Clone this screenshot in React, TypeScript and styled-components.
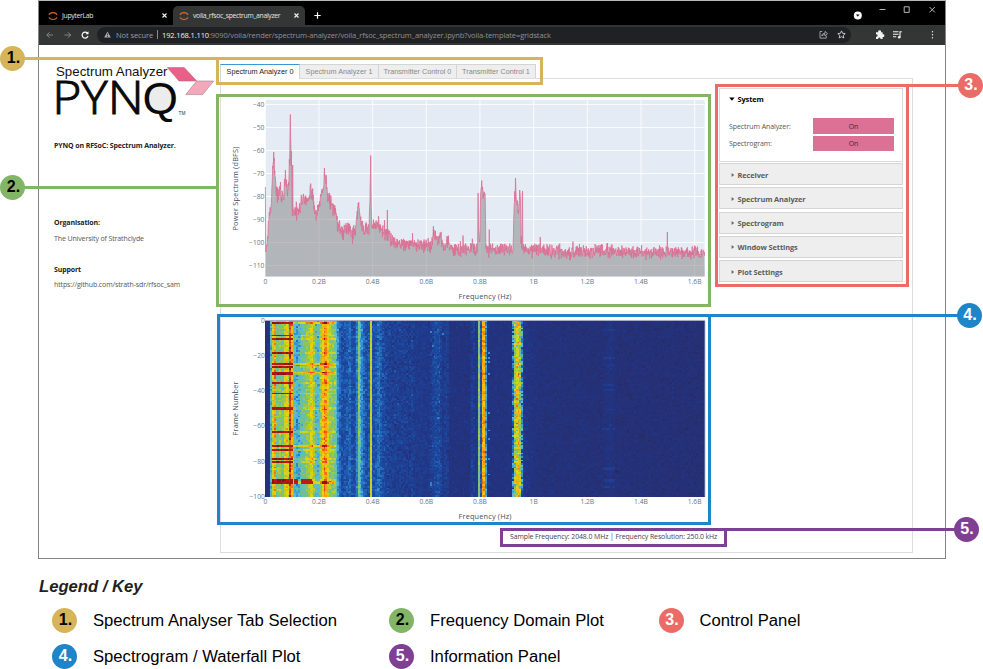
import React from "react";
import styled, { createGlobalStyle } from "styled-components";

const GlobalStyle = createGlobalStyle`
  * { box-sizing: border-box; }
  body { margin: 0; background: #fff; }
`;

const SEGOE = `"Open Sans", "Noto Sans", sans-serif`;
const ARIAL = `"Liberation Sans", Arial, sans-serif`;

/* ---------- data ---------- */

function makeRandom(seed: number) {
  let s = seed;
  return () => {
    s = (s * 1664525 + 1013904223) % 4294967296;
    return s / 4294967296;
  };
}

type Point = [number, number];

function lerpAt(points: Point[], x: number) {
  if (x <= points[0][0]) return points[0][1];
  for (let i = 1; i < points.length; i++) {
    if (x <= points[i][0]) {
      const [x0, y0] = points[i - 1];
      const [x1, y1] = points[i];
      return y0 + ((y1 - y0) * (x - x0)) / (x1 - x0 || 1);
    }
  }
  return points[points.length - 1][1];
}

/* Mean level of the power trace: chart x, chart y */
const ENVELOPE: Point[] = [
  [265, 256], [267.5, 240], [269, 214], [271, 207], [272.6, 172], [273.4, 156], [274.6, 166], [276, 188], [278, 195],
  [280, 189], [281.5, 198], [283.5, 194], [285.5, 173], [287.5, 194], [289, 176], [289.8, 150],
  [290.3, 117], [290.9, 150], [291.3, 170], [292, 206], [294, 211], [297, 210], [300, 208], [302.5, 197], [305.5, 198],
  [308.5, 200], [310.7, 186], [313, 198], [316, 215], [319, 204], [322, 189], [323.6, 186], [324.5, 176], [326, 182],
  [328, 198], [333, 205], [335.5, 207], [337.5, 225], [343, 231], [348, 226], [352.5, 236], [355, 228],
  [358.2, 206], [360.5, 220], [364.5, 232], [369, 228], [370, 200], [370.6, 158], [371.2, 200], [371.8, 228],
  [378, 225], [384, 231], [388, 233], [395, 242], [405, 244], [415, 244], [425, 246], [432, 245], [433.3, 231],
  [438, 239], [441, 236], [444, 248], [446.5, 241], [455, 249], [465, 249], [470.5, 249], [472.4, 239], [474, 249],
  [477.6, 249], [478, 196], [479, 240], [480, 236], [480.6, 190], [481.8, 186], [482.8, 191], [485.2, 193],
  [485.8, 249], [513, 250], [514.3, 200], [515.8, 188], [517, 205], [518.5, 212], [519.5, 196], [520.5, 200],
  [521, 243], [521.8, 244], [522.3, 196], [522.8, 249], [545, 250], [566, 252], [605, 250], [625, 252], [704.8, 252],
];

/* Isolated narrow peaks: chart x, top y */
const SPIKES: Point[] = [
  [265.5, 187], [273.6, 152], [290.3, 114.5], [291.5, 151], [292.6, 165], [324.4, 168], [325.4, 180], [285.4, 170], [310.8, 184],
  [280.4, 182], [358.3, 203], [370.6, 155.5], [378.4, 216], [384.5, 220], [387.4, 210], [412.5, 233], [463, 235.5],
  [478, 193], [481.8, 180.5], [489.3, 229.5], [515.6, 178], [519.6, 190], [522.5, 191], [540.2, 237], [573, 241.5],
  [595, 244], [667.4, 232],
];

const TRACE_STEP = 0.26;

function buildTrace() {
  const rnd = makeRandom(77);
  const pts: Point[] = [];
  for (let x = 265.4; x <= 704.7; x += TRACE_STEP) {
    const noise = rnd() + rnd() + rnd() - 1.5;
    const amp = x < 269 ? 4 : x < 400 ? 8 : 6.4;
    let y = lerpAt(ENVELOPE, x) + noise * amp + 0.5;
    for (const [sx, sy] of SPIKES) if (Math.abs(sx - x) <= TRACE_STEP / 2) y = sy;
    pts.push([x, y]);
  }
  return pts.map(([x, y]) => `${x.toFixed(2)} ${y.toFixed(1)}`).join("L");
}

/* Mean intensity of each waterfall column: chart x, value 0..1 */
const COLUMNS: Point[] = [
  [265, 0.04], [269.5, 0.07], [271, 0.34], [273, 0.6], [274.8, 0.78], [276.5, 0.47], [280, 0.52], [282, 0.44],
  [284, 0.5], [286.5, 0.72], [288.3, 0.56], [290, 0.9], [291.6, 0.88], [292.6, 0.48], [295, 0.4], [297.5, 0.31],
  [300, 0.4], [303, 0.45], [306.5, 0.48], [310, 0.56], [311.7, 0.72], [313.5, 0.55], [316, 0.39], [318.5, 0.38],
  [320.5, 0.48], [322.3, 0.66], [325, 0.82], [326.5, 0.75], [328.5, 0.57], [332, 0.5], [335.5, 0.48], [337, 0.36],
  [339, 0.24], [342, 0.16], [347, 0.19], [350, 0.22], [353, 0.15], [356, 0.2], [358, 0.32], [359, 0.54], [360, 0.38],
  [362, 0.28], [364, 0.22], [367, 0.15], [369.6, 0.2], [370.3, 0.6], [371.8, 0.6], [372.5, 0.17], [376, 0.19],
  [379, 0.25], [382, 0.17], [390, 0.12], [402, 0.12], [410, 0.1], [412, 0.13], [414, 0.1], [430, 0.09], [434, 0.15],
  [440, 0.16], [443, 0.09], [447, 0.13], [450, 0.06], [469, 0.06], [473, 0.12], [476, 0.07], [477.7, 0.1],
  [478.3, 0.5], [479.4, 0.48], [480.1, 0.12], [480.9, 0.2], [481.3, 0.68], [483, 0.79], [485.4, 0.72], [486.1, 0.1],
  [490, 0.06], [512.5, 0.06], [513.8, 0.36], [515.5, 0.58], [517.8, 0.72], [519.5, 0.6], [521.5, 0.38], [522.5, 0.14],
  [525, 0.08], [540, 0.05], [604, 0.04], [610, 0.07], [616, 0.04], [704, 0.035],
];

const BURST_ROWS = [1, 8, 10, 18, 24, 26, 29, 30, 35, 41, 49, 50, 63, 71, 73, 78, 80, 90, 91, 92];
const WIDE_ROWS = [1, 24, 29, 71, 91, 92];

const RAMP: [number, number, number, number][] = [
  [0, 38, 44, 104], [0.08, 34, 54, 134], [0.17, 27, 76, 162], [0.27, 42, 130, 205], [0.37, 84, 188, 216],
  [0.48, 120, 192, 130], [0.56, 166, 205, 55], [0.66, 226, 219, 10], [0.76, 250, 170, 12], [0.86, 240, 82, 22],
  [0.93, 208, 30, 22], [1, 136, 20, 18],
];

function rampColour(v: number) {
  const k = Math.max(1, RAMP.findIndex((r) => v <= r[0]));
  const a = RAMP[k - 1];
  const b = RAMP[k];
  const t = (v - a[0]) / (b[0] - a[0]);
  const mix = (i: number) => Math.round(a[i] + (b[i] - a[i]) * t);
  return `rgb(${mix(1)},${mix(2)},${mix(3)})`;
}

const LEVELS = 40;
const COLS = 256;
const ROWS = 100;
const CELL_W = 439.4 / COLS;
const CELL_H = 176 / ROWS;

function buildWaterfall() {
  const rnd = makeRandom(2048);
  const paths: string[] = Array.from({ length: LEVELS + 1 }, () => "");
  for (let r = 0; r < ROWS; r++) {
    let runStart = 0;
    let runLevel = -1;
    for (let c = 0; c <= COLS; c++) {
      let level = -2;
      if (c < COLS) {
        const x = 265.3 + (c + 0.5) * CELL_W;
        const base = lerpAt(COLUMNS, x);
        const n = rnd() + rnd() - 1;
        let amp = base < 0.1 ? 0.035 : base < 0.3 ? 0.075 : 0.12;
        if (x > 513 && x < 522.5) amp = 0.24;
        if (x > 369.8 && x < 372) amp = 0.04;
        let v = base + n * amp;
        if (BURST_ROWS.includes(r)) {
          if (x > 271.5 && x < 292.5) v = 0.94 + rnd() * 0.06;
          else if (x >= 292.5 && x < 336) v += WIDE_ROWS.includes(r) ? 0.24 : 0.1;
        }
        if (r > 89 && r < 93 && ((x > 302 && x < 312) || (x > 294 && x < 298))) v = 0.94;
        if (x > 430 && x < 443 && rnd() > 0.985) v = 0.27;
        if (x > 489 && x < 490.8 && [18, 21, 23, 30, 52, 62, 67, 78, 87].includes(r)) v = 0.3;
        if (x > 602 && x < 616 && [5, 21, 25, 36, 39, 50, 61, 83, 84, 90, 91, 94].includes(r)) v += 0.05;
        level = Math.round(Math.min(1, Math.max(0, v)) * LEVELS);
      }
      if (level !== runLevel) {
        if (runLevel >= 0) {
          const x0 = 265.3 + runStart * CELL_W;
          const w = (c - runStart) * CELL_W;
          const y0 = 320.5 + r * CELL_H;
          paths[runLevel] += `M${x0.toFixed(2)} ${y0.toFixed(2)}h${w.toFixed(2)}v${CELL_H}h${(-w).toFixed(2)}z`;
        }
        runStart = c;
        runLevel = level;
      }
    }
  }
  return paths;
}

const TRACE = buildTrace();
const WATERFALL = buildWaterfall();
const X_TICKS = ["0", "0.2B", "0.4B", "0.6B", "0.8B", "1B", "1.2B", "1.4B", "1.6B"];
const tickX = (i: number) => 265.3 + i * 53.67;

/* ---------- page and browser chrome ---------- */

const Page = styled.div`
  position: relative;
  width: 983px;
  height: 669px;
  overflow: hidden;
  background: #fff;
  font-family: ${SEGOE};
`;

const BrowserWindow = styled.div`
  width: 908px;
  height: 559px;
  margin-left: 38px;
  border: 1px solid #858585;
  border-top-color: #b5bab8;
  display: flex;
  flex-direction: column;
`;

const TabStrip = styled.div`
  height: 24px;
  background: #000;
  display: flex;
  align-items: flex-end;
`;

const BrowserTab = styled.div<{ $active?: boolean; $width: number }>`
  width: ${(p) => p.$width}px;
  height: 19px;
  padding: 0 6px 0 ${(p) => (p.$active ? 6 : 9)}px;
  background: ${(p) => (p.$active ? "#343635" : "transparent")};
  border-radius: 5px 5px 0 0;
  display: flex;
  align-items: center;
  gap: 4px;
  font-size: 6.8px;
  letter-spacing: -0.3px;
  color: #e4e5e5;
  white-space: nowrap;
  svg:last-child { margin-left: auto; }
`;

const NewTab = styled.div`
  width: 24px;
  height: 20px;
  display: flex;
  align-items: center;
  justify-content: center;
`;

const WindowButtons = styled.div`
  margin-left: auto;
  height: 24px;
  display: flex;
`;

const Toolbar = styled.div`
  height: 20px;
  background: #343635;
  display: flex;
  align-items: center;
  padding-bottom: 1px;
`;

const NavIcons = styled.div`
  width: 58px;
  display: flex;
`;

const AddressBar = styled.div`
  width: 754px;
  height: 16px;
  border-radius: 8px;
  background: #202124;
  display: flex;
  align-items: center;
  padding: 0 5px 0 7px;
  font-size: 7.5px;
  color: #8f9193;
  white-space: nowrap;
`;

const Security = styled.span`
  width: 41px;
  margin-left: 5px;
  letter-spacing: -0.08px;
  color: #9b9d9f;
`;

const Divider = styled.span`
  width: 1px;
  height: 9px;
  margin-right: 4px;
  background: #8a8c8e;
`;

const Host = styled.span`
  color: #f1f1f1;
  letter-spacing: -0.14px;
`;

const UrlPath = styled.span`
  letter-spacing: -0.1px;
`;

const BarIcons = styled.div`
  margin-left: auto;
  display: flex;
  gap: 9px;
`;

const ExtensionIcons = styled.div`
  flex: 1;
  display: flex;
  align-items: center;
  padding-left: 24px;
`;

/* ---------- notebook page ---------- */

const Content = styled.div`
  flex: 1;
  display: grid;
  grid-template-columns: 181px 693px;
`;

const Sidebar = styled.aside`
  padding: 19px 0 0 15px;
  color: #3c3c3c;
  font-size: 7px;
  letter-spacing: -0.12px;
  line-height: 10px;
  white-space: nowrap;
`;

const Logo = styled.svg`
  display: block;
  width: 166px;
  height: 56px;
  overflow: visible;
  letter-spacing: 0;
`;

const Heading = styled.div<{ $top: number }>`
  margin-top: ${(p) => p.$top}px;
  font-weight: 700;
  color: #222;
`;

const Detail = styled.div`
  margin-top: 5.5px;
  color: #555;
`;

const Workspace = styled.main`
  padding-top: 19px;
`;

const NotebookTabs = styled.div`
  height: 14px;
  display: flex;
  position: relative;
  z-index: 1;
`;

const NotebookTab = styled.div<{ $active?: boolean; $width: number }>`
  width: ${(p) => p.$width}px;
  height: ${(p) => (p.$active ? 15 : 14)}px;
  border: 1px solid #d4d4d4;
  border-left-width: ${(p) => (p.$active ? 1 : 0)}px;
  border-bottom: 0;
  ${(p) => p.$active && "border-top-color: #3b97d8;"}
  background: ${(p) => (p.$active ? "#fff" : "#eee")};
  color: ${(p) => (p.$active ? "#222" : "#888")};
  font: 7.25px/13px ${ARIAL};
  text-align: center;
  white-space: nowrap;
`;

const TabPanel = styled.section`
  height: 475px;
  border: 1px solid #ddd;
  display: grid;
  grid-template-columns: 498px 184px;
`;

const Plots = styled.div`
  padding-top: 15px;
  display: flex;
  flex-direction: column;
`;

const Chart = styled.svg`
  display: block;
  width: 490px;
  font-family: ${SEGOE};
`;

const TickText = styled.text`
  font-size: 6.7px;
  fill: #66748a;
`;

const AxisTitle = styled.text`
  font-size: 7.3px;
  fill: #414f66;
`;

const Info = styled.div`
  padding: 6px 0 0 289px;
  font-size: 6.9px;
  letter-spacing: -0.08px;
  line-height: 12px;
  color: #444;
  white-space: nowrap;
`;

const Controls = styled.div`
  padding-top: 9px;
  display: flex;
  flex-direction: column;
  gap: 2.2px;
`;

const OpenSection = styled.div`
  height: 74px;
  margin-bottom: -0.9px;
  border: 1px solid #d9d9d9;
  padding: 4px 8px 0 9px;
`;

const SectionTitle = styled.div<{ $open?: boolean }>`
  display: flex;
  align-items: center;
  gap: 2.5px;
  height: 11px;
  font-size: 7.4px;
  letter-spacing: -0.1px;
  font-weight: 700;
  color: ${(p) => (p.$open ? "#000" : "#5c5c5c")};
`;

const ClosedSection = styled.div`
  height: 22px;
  border: 1px solid #d6d6d6;
  background: #eee;
  padding: 1px 0 0 11px;
  display: flex;
  align-items: center;
`;

const SwitchList = styled.div`
  margin-top: 14px;
  display: flex;
  flex-direction: column;
  gap: 1.5px;
`;

const SwitchRow = styled.div`
  display: flex;
  align-items: center;
  justify-content: space-between;
  height: 16px;
  font-size: 7px;
  letter-spacing: -0.08px;
  color: #555;
`;

const Toggle = styled.button`
  width: 81px;
  height: 15.5px;
  border: 0;
  padding: 0;
  background: #dc7095;
  color: #4b2735;
  font: 7px ${SEGOE};
`;

/* ---------- annotations ---------- */

const Frame = styled.div<{ $x: number; $y: number; $w: number; $h: number; $c: string }>`
  position: absolute;
  z-index: 2;
  left: ${(p) => p.$x}px;
  top: ${(p) => p.$y}px;
  width: ${(p) => p.$w}px;
  height: ${(p) => p.$h}px;
  border: 3px solid ${(p) => p.$c};
`;

const Connector = styled.div<{ $x: number; $y: number; $w: number; $c: string }>`
  position: absolute;
  z-index: 2;
  left: ${(p) => p.$x}px;
  top: ${(p) => p.$y}px;
  width: ${(p) => p.$w}px;
  height: 3px;
  background: ${(p) => p.$c};
`;

const Badge = styled.div<{ $c: string; $light?: boolean }>`
  width: 25px;
  height: 25px;
  flex: none;
  border-radius: 50%;
  background: ${(p) => p.$c};
  color: ${(p) => (p.$light ? "#fff" : "#000")};
  font: bold 16px/24px ${ARIAL};
  text-align: center;
  padding-left: 2px;
`;

const PinnedBadge = styled(Badge)<{ $x: number; $y: number }>`
  position: absolute;
  z-index: 3;
  left: ${(p) => p.$x}px;
  top: ${(p) => p.$y}px;
`;

const Legend = styled.footer`
  padding: 18px 0 0 39px;
  color: #000;
  font-family: ${ARIAL};
`;

const LegendTitle = styled.div`
  font: italic bold 16.65px/20px ${ARIAL};
  color: #231f20;
`;

const LegendGrid = styled.div`
  margin: 11px 0 0 13px;
  display: grid;
  grid-template-columns: 337px 269.5px 250px;
  row-gap: 11px;
`;

const LegendItem = styled.div`
  display: flex;
  align-items: center;
  gap: 16px;
  height: 25px;
  font-size: 16.65px;
  line-height: 23px;
  white-space: nowrap;
`;

const GOLD = "#d6b459";
const GREEN = "#82b566";
const RED = "#eb6b66";
const BLUE = "#1e86c8";
const PURPLE = "#7f3f93";

/* ---------- pieces ---------- */

const JupyterMark = () => (
  <svg width="10" height="10" viewBox="0 0 10 10" fill="none" stroke="#d9692c" strokeWidth="1.2">
    <path d="M1 3.8C2 .9 8 .9 9 3.8M1 6.4C2 9.2 8 9.2 9 6.4" />
  </svg>
);

const CloseMark = () => (
  <svg width="5" height="5" viewBox="0 0 5 5" stroke="#f3f3f3" strokeWidth="1.1">
    <path d="M.5 .5l4 4M4.5 .5l-4 4" />
  </svg>
);

const Caret = ({ open }: { open?: boolean }) => (
  <svg width={open ? 6 : 4} height="6" viewBox={open ? "0 0 6 6" : "0 0 4 6"} fill={open ? "#000" : "#666"}>
    <path d={open ? "M.2 1.5h5.4L2.9 4.7z" : "M.6 .9v4.2L3.2 3z"} />
  </svg>
);

function XAxis({ y }: { y: number }) {
  return (
    <>
      {X_TICKS.map((t, i) => (
        <TickText key={t} x={tickX(i)} y={y} textAnchor="middle">{t}</TickText>
      ))}
      <AxisTitle x="485" y={y + 15} textAnchor="middle" textLength="53">Frequency (Hz)</AxisTitle>
    </>
  );
}

function PowerChart() {
  const rows = [40, 50, 60, 70, 80, 90, 100, 110];
  return (
    <Chart height="218" viewBox="221 94 490 218">
      <rect x="265.3" y="100" width="439.4" height="176.6" fill="#e5ebf5" />
      {rows.map((v, i) => (
        <path key={v} d={`M265.3 ${104.5 + i * 23}H704.7`} stroke="#fff" strokeWidth={v === 80 ? 1.2 : 0.8} />
      ))}
      {X_TICKS.map((t, i) => (
        <path key={t} d={`M${tickX(i)} 100V276.6`} stroke="#fff" strokeWidth="0.8" />
      ))}
      <path d={`M265.3 276.6L${TRACE}L704.7 276.6Z`} fill="#808080" fillOpacity="0.5" />
      <path d={`M${TRACE}`} fill="none" stroke="#db7093" strokeWidth="0.8" strokeLinejoin="bevel" />
      {rows.map((v, i) => (
        <TickText key={v} x="264.4" y={106.8 + i * 23} textAnchor="end">{`−${v}`}</TickText>
      ))}
      <XAxis y={284.3} />
      <AxisTitle transform="translate(237.8 188.5) rotate(-90)" textAnchor="middle" textLength="84">
        Power Spectrum (dBFS)
      </AxisTitle>
    </Chart>
  );
}

function WaterfallChart() {
  return (
    <Chart height="213" viewBox="221 312 490 213">
      <rect x="265.3" y="320.5" width="439.4" height="176" fill="#262c68" />
      <g shapeRendering="crispEdges">
        {WATERFALL.map((d, i) => (d ? <path key={i} d={d} fill={rampColour(i / LEVELS)} /> : null))}
      </g>
      <path d="M265 320.3H705V496.6" fill="none" stroke="#b5b6d4" strokeWidth="0.8" />
      {[0, 20, 40, 60, 80, 100].map((v, i) => (
        <TickText key={v} x="264.8" y={322.8 + i * 35.2} textAnchor="end">{v ? `−${v}` : "0"}</TickText>
      ))}
      <XAxis y={504.3} />
      <AxisTitle transform="translate(237.8 408.5) rotate(-90)" textAnchor="middle" textLength="54">
        Frame Number
      </AxisTitle>
    </Chart>
  );
}

function PynqLogo() {
  return (
    <Logo viewBox="54 64.7 166 56">
      <path d="M167.3 68.3H184.3L196.7 81.7H179Z" fill="#ea5f87" stroke="#b56c80" strokeWidth=".6" />
      <path d="M196.7 81.7H213.7L202.7 95.3H185.7Z" fill="#f4a8bb" stroke="#9c8087" strokeWidth=".6" />
      <ellipse cx="160.3" cy="98" rx="14" ry="16" fill="#ececec" />
      <text x="56" y="77" textLength="111.5" lengthAdjust="spacingAndGlyphs" fontFamily={ARIAL} fontSize="13.5" fill="#111">
        Spectrum Analyzer
      </text>
      <text x="52.2" y="115" textLength="91.5" lengthAdjust="spacingAndGlyphs" fontFamily={`"Open Sans", sans-serif`} fontWeight="300" fontSize="45.5" fill="#0a0a0a" stroke="#0a0a0a" strokeWidth="1">
        PYN
      </text>
      <text x="142.6" y="114.7" textLength="35.5" lengthAdjust="spacingAndGlyphs" fontFamily={ARIAL} fontSize="45" fill="#0a0a0a">
        Q
      </text>
      <text x="178.6" y="116" fontFamily={ARIAL} fontSize="4.8" fill="#333">TM</text>
    </Logo>
  );
}

function BrowserChrome() {
  return (
    <>
      <TabStrip>
        <BrowserTab $width={134}>
          <JupyterMark />
          JupyterLab
          <CloseMark />
        </BrowserTab>
        <BrowserTab $active $width={132}>
          <JupyterMark />
          voila_rfsoc_spectrum_analyzer
          <CloseMark />
        </BrowserTab>
        <NewTab>
          <svg width="7" height="7" viewBox="0 0 7 7" stroke="#fff" strokeWidth="1.2"><path d="M3.5 .3v6.4M.3 3.5h6.4" /></svg>
        </NewTab>
        <WindowButtons>
          <svg width="96" height="24" viewBox="0 0 96 24" fill="none" stroke="#c9c9c9" strokeWidth=".9">
            <circle cx="8.8" cy="14.4" r="4" fill="#fff" stroke="none" />
            <path d="M7 13.5h3.6L8.8 15.8z" fill="#111" stroke="none" />
            <path d="M30.5 8.5h6M55.2 5.8h5v5.6h-5zM80.5 6l5.4 5.4M85.9 6l-5.4 5.4" />
          </svg>
        </WindowButtons>
      </TabStrip>
      <Toolbar>
        <NavIcons>
          <svg width="58" height="16" viewBox="0 0 58 16" fill="none" stroke="#8b8d8e" strokeWidth=".9">
            <path d="M14 8H7.8M10.6 5.2L7.8 8l2.8 2.8M25.5 8h6.2M28.9 5.2L31.7 8l-2.8 2.8" />
            <path d="M48.5 6.2A3 3 0 1 0 49 9" stroke="#fff" strokeWidth="1.2" />
            <path d="M49.5 4.2v3h-3z" fill="#fff" stroke="none" />
          </svg>
        </NavIcons>
        <AddressBar>
          <svg width="7" height="7" viewBox="0 0 7 7"><path d="M3.5 .5L6.8 6.5H.2z" fill="#a9abad" /><path d="M3.5 2.6v1.8M3.5 5v.8" stroke="#202124" strokeWidth=".8" /></svg>
          <Security>Not secure</Security>
          <Divider />
          <Host>192.168.1.110</Host>
          <UrlPath>:9090/voila/render/spectrum-analyzer/voila_rfsoc_spectrum_analyzer.ipynb?voila-template=gridstack</UrlPath>
          <BarIcons>
            <svg width="9" height="9" viewBox="0 0 9 9" fill="none" stroke="#b9bbbd" strokeWidth=".8"><path d="M3.2 1.5H1v6.6h6.3V5.8M2.8 6C3 4 4.3 3.3 6 3.3V1.4l2.5 2.3L6 5.9V4.6C4.6 4.6 3.5 5 2.8 6z" /></svg>
            <svg width="9" height="9" viewBox="0 0 9 9" fill="none" stroke="#d2d3d4" strokeWidth=".9"><path d="M4.5 .9l1.1 2.4 2.6.3-1.9 1.8.5 2.6-2.3-1.3-2.3 1.3.5-2.6L.8 3.6l2.6-.3z" /></svg>
          </BarIcons>
        </AddressBar>
        <ExtensionIcons>
          <svg width="70" height="12" viewBox="0 0 70 12" fill="#f2f2f2">
            <path d="M1 3.2h2.3a1.4 1.4 0 1 1 2.6 0H7.6v2.1a1.4 1.4 0 1 1 0 2.7V10H5.5a1.2 1.2 0 1 0-2.3 0H1V7.7a1.2 1.2 0 1 0 0-2.3z" />
            <path d="M18 2.7h5.5M18 5.2h5.5M18 7.7h3.2M25 8V2.7h1.8" stroke="#f2f2f2" strokeWidth="1.1" fill="none" />
            <circle cx="24.2" cy="8.2" r="1.3" />
            <circle cx="57.5" cy="2.7" r=".7" /><circle cx="57.5" cy="5.7" r=".7" /><circle cx="57.5" cy="8.7" r=".7" />
          </svg>
        </ExtensionIcons>
      </Toolbar>
    </>
  );
}

const LEGEND = [
  { n: "1.", label: "Spectrum Analyser Tab Selection", c: GOLD, light: false },
  { n: "2.", label: "Frequency Domain Plot", c: GREEN, light: false },
  { n: "3.", label: "Control Panel", c: RED, light: true },
  { n: "4.", label: "Spectrogram / Waterfall Plot", c: BLUE, light: true },
  { n: "5.", label: "Information Panel", c: PURPLE, light: true },
];

export default function App() {
  return (
    <Page>
      <GlobalStyle />
      <BrowserWindow>
        <BrowserChrome />
        <Content>
          <Sidebar>
            <PynqLogo />
            <Heading $top={21}>PYNQ on RFSoC: Spectrum Analyzer.</Heading>
            <Heading $top={67}>Organisation:</Heading>
            <Detail>The University of Strathclyde</Detail>
            <Heading $top={21}>Support</Heading>
            <Detail>https://github.com/strath-sdr/rfsoc_sam</Detail>
          </Sidebar>
          <Workspace>
            <NotebookTabs>
              <NotebookTab $active $width={80}>Spectrum Analyzer 0</NotebookTab>
              <NotebookTab $width={79}>Spectrum Analyzer 1</NotebookTab>
              <NotebookTab $width={78}>Transmitter Control 0</NotebookTab>
              <NotebookTab $width={79}>Transmitter Control 1</NotebookTab>
            </NotebookTabs>
            <TabPanel>
              <Plots>
                <PowerChart />
                <WaterfallChart />
                <Info>Sample Frequency: 2048.0 MHz | Frequency Resolution: 250.0 kHz</Info>
              </Plots>
              <Controls>
                <OpenSection>
                  <SectionTitle $open><Caret open />System</SectionTitle>
                  <SwitchList>
                    <SwitchRow>Spectrum Analyzer:<Toggle>On</Toggle></SwitchRow>
                    <SwitchRow>Spectrogram:<Toggle>On</Toggle></SwitchRow>
                  </SwitchList>
                </OpenSection>
                {["Receiver", "Spectrum Analyzer", "Spectrogram", "Window Settings", "Plot Settings"].map((s) => (
                  <ClosedSection key={s}>
                    <SectionTitle><Caret />{s}</SectionTitle>
                  </ClosedSection>
                ))}
              </Controls>
            </TabPanel>
          </Workspace>
        </Content>
      </BrowserWindow>

      <Legend>
        <LegendTitle>Legend / Key</LegendTitle>
        <LegendGrid>
          {LEGEND.map((l) => (
            <LegendItem key={l.n}>
              <Badge $c={l.c} $light={l.light}>{l.n}</Badge>
              {l.label}
            </LegendItem>
          ))}
        </LegendGrid>
      </Legend>

      <Connector $x={20} $y={57} $w={198} $c={GOLD} />
      <Frame $x={216} $y={57} $w={327} $h={28} $c={GOLD} />
      <PinnedBadge $x={0} $y={46} $c={GOLD}>1.</PinnedBadge>
      <Connector $x={20} $y={186} $w={198} $c={GREEN} />
      <Frame $x={216} $y={94} $w={495} $h={213} $c={GREEN} />
      <PinnedBadge $x={0} $y={175} $c={GREEN}>2.</PinnedBadge>
      <Connector $x={906} $y={84} $w={60} $c={RED} />
      <Frame $x={715} $y={84} $w={194} $h={203} $c={RED} />
      <PinnedBadge $x={957.5} $y={72.5} $c={RED} $light>3.</PinnedBadge>
      <Connector $x={708} $y={314} $w={255} $c={BLUE} />
      <Frame $x={217} $y={314} $w={494} $h={211} $c={BLUE} />
      <PinnedBadge $x={956.5} $y={302.5} $c={BLUE} $light>4.</PinnedBadge>
      <Connector $x={724} $y={528} $w={235} $c={PURPLE} />
      <Frame $x={500} $y={528} $w={227} $h={19} $c={PURPLE} />
      <PinnedBadge $x={953.5} $y={516.5} $c={PURPLE} $light>5.</PinnedBadge>
    </Page>
  );
}
